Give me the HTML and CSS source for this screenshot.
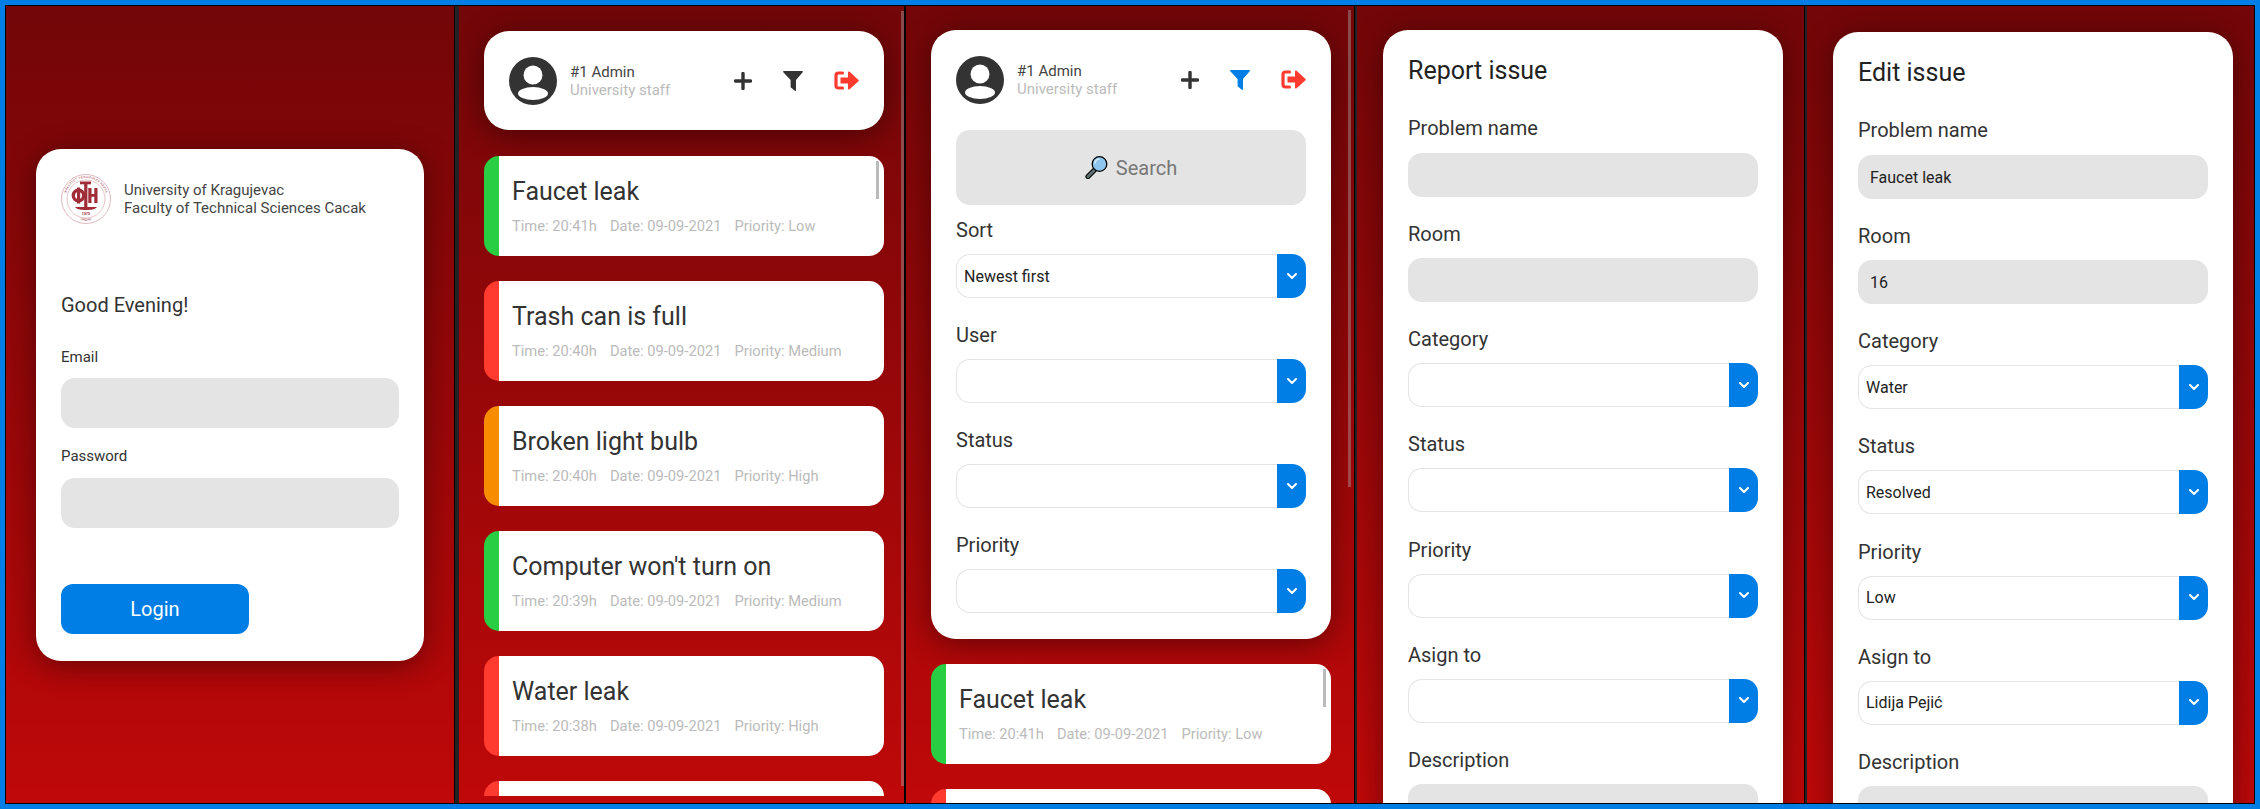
FILE: index.html
```html
<!DOCTYPE html>
<html lang="en">
<head>
<meta charset="utf-8">
<title>Issue reporting screens</title>
<link rel="stylesheet" href="styles.css">
</head>
<body>
<svg class="defs" width="0" height="0" aria-hidden="true">
  <symbol id="i-avatar" viewBox="0 0 48 48">
    <circle cx="24" cy="24" r="24" fill="#333"/>
    <circle cx="24" cy="18" r="9.5" fill="#fff"/>
    <ellipse cx="24" cy="36.5" rx="15" ry="6.5" fill="#fff"/>
  </symbol>
  <symbol id="i-plus" viewBox="0 0 18 18">
    <path d="M9 1.5v15M1.5 9h15" stroke="currentColor" stroke-width="3.4" stroke-linecap="round" fill="none"/>
  </symbol>
  <symbol id="i-filter" viewBox="0 0 20 20">
    <path d="M.8 0h18.4c.7 0 1 .8.5 1.3L13 9v10.2c0 .7-.7 1-1.2.6L7.6 16.300V9L.3 1.300C-.2.800.1 0 .8 0z" fill="currentColor"/>
  </symbol>
  <symbol id="i-logout" viewBox="0 0 25 19">
    <path d="M8.500 2H4.500C3 2 2 3 2 4.500v10C2 16 3 17 4.500 17h4" stroke="currentColor" stroke-width="3.200" fill="none" stroke-linecap="round"/>
    <path d="M6.500 6.500h7.500V1.500c0-1 .9-1.400 1.600-.8L24.500 9c.4.300.4.900 0 1.200l-8.900 8.100c-.7.600-1.600.200-1.600-.8v-5H6.500z" fill="currentColor"/>
  </symbol>
  <symbol id="i-chevron" viewBox="0 0 10 7">
    <path d="M1 1l4 4 4-4" stroke="#fff" stroke-width="2" fill="none" stroke-linecap="round" stroke-linejoin="round"/>
  </symbol>
</svg>

<main class="frame">
  <div class="inner">

    <section class="panel panel-login">
      <form class="card login-card">
        <div class="brand">
          <svg class="logo" viewBox="0 0 50 50" role="img" aria-label="Faculty crest">
            <defs>
              <path id="ring-top" d="M5.500 31A20.500 20.500 0 1 1 44.500 31"/>
              <path id="ring-bottom" d="M12 42.500A22 22 0 0 0 38 42.500"/>
            </defs>
            <circle cx="25" cy="25" r="24.500" fill="none" stroke="#cf9ba0" stroke-width=".7"/>
            <circle cx="25" cy="25" r="19" fill="none" stroke="#cf9ba0" stroke-width=".6"/>
            <text class="logo-ring"><textPath href="#ring-top" startOffset="50%" text-anchor="middle">ФАКУЛТЕТ ТЕХНИЧКИХ НАУКА</textPath></text>
            <text class="logo-ring"><textPath href="#ring-bottom" startOffset="50%" text-anchor="middle">ЧАЧАК</textPath></text>
            <g fill="#a02c37">
              <rect x="19" y="7.500" width="11" height="2.800"/>
              <rect x="23.200" y="8" width="3.200" height="26"/>
              <rect x="27.300" y="14" width="3.200" height="15"/>
              <rect x="33.300" y="14" width="3.200" height="15"/>
              <rect x="28" y="20" width="7" height="2.800"/>
              <path d="M14 33h22c-2 2.200-5 3-11 3s-9-.8-11-3z"/>
            </g>
            <circle cx="17.500" cy="21.500" r="5.200" fill="none" stroke="#a02c37" stroke-width="3.400"/>
            <rect x="16" y="13.500" width="3.200" height="16" fill="#a02c37"/>
            <text class="logo-year" x="25" y="40.500" text-anchor="middle">1975</text>
          </svg>
          <p class="brand-text">University of Kragujevac<br>Faculty of Technical Sciences Cacak</p>
        </div>
        <h1 class="greeting">Good Evening!</h1>
        <label class="login-label" for="email">Email</label>
        <input class="login-input" id="email" type="text">
        <label class="login-label login-label-second" for="password">Password</label>
        <input class="login-input" id="password" type="password">
        <button class="login-button" type="button">Login</button>
      </form>
    </section>

    <div class="divider divider-thick"></div>

    <section class="panel panel-list">
      <div class="scroll-clip">
        <header class="card user-card">
          <div class="user-row">
            <svg class="avatar"><use href="#i-avatar"/></svg>
            <div class="user-text"><div class="user-name">#1 Admin</div><div class="user-role">University staff</div></div>
            <svg class="tool tool-plus"><use href="#i-plus"/></svg>
            <svg class="tool tool-filter"><use href="#i-filter"/></svg>
            <svg class="tool tool-logout"><use href="#i-logout"/></svg>
          </div>
        </header>
        <article class="task task-green">
          <h2 class="task-title">Faucet leak</h2>
          <p class="task-meta"><span>Time: 20:41h</span><span>Date: 09-09-2021</span><span>Priority: Low</span></p>
          <div class="task-thumb"></div>
        </article>
        <article class="task task-red">
          <h2 class="task-title">Trash can is full</h2>
          <p class="task-meta"><span>Time: 20:40h</span><span>Date: 09-09-2021</span><span>Priority: Medium</span></p>
        </article>
        <article class="task task-orange">
          <h2 class="task-title">Broken light bulb</h2>
          <p class="task-meta"><span>Time: 20:40h</span><span>Date: 09-09-2021</span><span>Priority: High</span></p>
        </article>
        <article class="task task-green">
          <h2 class="task-title">Computer won't turn on</h2>
          <p class="task-meta"><span>Time: 20:39h</span><span>Date: 09-09-2021</span><span>Priority: Medium</span></p>
        </article>
        <article class="task task-red">
          <h2 class="task-title">Water leak</h2>
          <p class="task-meta"><span>Time: 20:38h</span><span>Date: 09-09-2021</span><span>Priority: High</span></p>
        </article>
        <article class="task task-red"></article>
      </div>
      <div class="scrollbar scrollbar-list"></div>
    </section>

    <div class="divider divider-thin"></div>

    <section class="panel panel-filter">
      <div class="card filter-card">
        <div class="user-row">
          <svg class="avatar"><use href="#i-avatar"/></svg>
          <div class="user-text"><div class="user-name">#1 Admin</div><div class="user-role">University staff</div></div>
          <svg class="tool tool-plus"><use href="#i-plus"/></svg>
          <svg class="tool tool-filter tool-active"><use href="#i-filter"/></svg>
          <svg class="tool tool-logout"><use href="#i-logout"/></svg>
        </div>
        <button class="search" type="button">
          <svg class="search-icon" viewBox="0 0 23 23" aria-hidden="true">
            <path d="M9 14.500 3 20.500" stroke="#000" stroke-width="5.200" stroke-linecap="round"/>
            <path d="M9 14.500 3 20.500" stroke="#5e7074" stroke-width="3" stroke-linecap="round"/>
            <circle cx="14.500" cy="8" r="7.300" fill="#8fc6ee" stroke="#000" stroke-width="1.300"/>
            <path d="M9.800 7.500a5 5 0 0 1 4.700-4.500" stroke="#d5ecfb" stroke-width="1.500" fill="none"/>
          </svg>
          <span>Search</span>
        </button>
        <div class="group group-first"><div class="label">Sort</div>
          <div class="select"><select><option>Newest first</option></select><span class="select-btn"><svg class="chevron"><use href="#i-chevron"/></svg></span></div>
        </div>
        <div class="group"><div class="label">User</div>
          <div class="select"><select></select><span class="select-btn"><svg class="chevron"><use href="#i-chevron"/></svg></span></div>
        </div>
        <div class="group"><div class="label">Status</div>
          <div class="select"><select></select><span class="select-btn"><svg class="chevron"><use href="#i-chevron"/></svg></span></div>
        </div>
        <div class="group group-last"><div class="label">Priority</div>
          <div class="select"><select></select><span class="select-btn"><svg class="chevron"><use href="#i-chevron"/></svg></span></div>
        </div>
      </div>
      <article class="task task-green">
        <h2 class="task-title">Faucet leak</h2>
        <p class="task-meta"><span>Time: 20:41h</span><span>Date: 09-09-2021</span><span>Priority: Low</span></p>
        <div class="task-thumb"></div>
      </article>
      <article class="task task-red"></article>
      <div class="scrollbar scrollbar-filter"></div>
    </section>

    <div class="divider divider-thick-alt"></div>

    <section class="panel panel-form">
      <form class="card form-card">
        <h2 class="form-title">Report issue</h2>
        <div class="group"><div class="label">Problem name</div><input class="field" type="text"></div>
        <div class="group"><div class="label">Room</div><input class="field" type="text"></div>
        <div class="group"><div class="label">Category</div>
          <div class="select"><select></select><span class="select-btn"><svg class="chevron"><use href="#i-chevron"/></svg></span></div>
        </div>
        <div class="group"><div class="label">Status</div>
          <div class="select"><select></select><span class="select-btn"><svg class="chevron"><use href="#i-chevron"/></svg></span></div>
        </div>
        <div class="group"><div class="label">Priority</div>
          <div class="select"><select></select><span class="select-btn"><svg class="chevron"><use href="#i-chevron"/></svg></span></div>
        </div>
        <div class="group"><div class="label">Asign to</div>
          <div class="select"><select></select><span class="select-btn"><svg class="chevron"><use href="#i-chevron"/></svg></span></div>
        </div>
        <div class="group"><div class="label">Description</div><div class="textarea"></div></div>
      </form>
    </section>

    <div class="divider divider-thick-alt"></div>

    <section class="panel panel-form panel-edit">
      <form class="card form-card">
        <h2 class="form-title">Edit issue</h2>
        <div class="group"><div class="label">Problem name</div><input class="field" type="text" value="Faucet leak"></div>
        <div class="group"><div class="label">Room</div><input class="field" type="text" value="16"></div>
        <div class="group"><div class="label">Category</div>
          <div class="select"><select><option>Water</option></select><span class="select-btn"><svg class="chevron"><use href="#i-chevron"/></svg></span></div>
        </div>
        <div class="group"><div class="label">Status</div>
          <div class="select"><select><option>Resolved</option></select><span class="select-btn"><svg class="chevron"><use href="#i-chevron"/></svg></span></div>
        </div>
        <div class="group"><div class="label">Priority</div>
          <div class="select"><select><option>Low</option></select><span class="select-btn"><svg class="chevron"><use href="#i-chevron"/></svg></span></div>
        </div>
        <div class="group"><div class="label">Asign to</div>
          <div class="select"><select><option>Lidija Pejić</option></select><span class="select-btn"><svg class="chevron"><use href="#i-chevron"/></svg></span></div>
        </div>
        <div class="group"><div class="label">Description</div><div class="textarea"></div></div>
      </form>
    </section>

  </div>
</main>
</body>
</html>
```

FILE: styles.css
```css
* { box-sizing: border-box; }

html, body { margin: 0; padding: 0; height: 809px; }

body {
  font-family: Roboto, "Liberation Sans", sans-serif;
  color: #333;
  overflow: hidden;
}

.defs { position: absolute; }

.frame {
  width: 2260px;
  height: 809px;
  padding: 5px;
  background: #007ee5;
}

.inner {
  display: flex;
  height: 799px;
  border: 1px solid #000;
  background: #000;
}

.divider { flex: none; height: 100%; }
.divider-thick { width: 5px; background: linear-gradient(90deg, #000 1px, #222 1px); }
.divider-thin { width: 2px; background: #000; }
.divider-thick-alt { width: 3px; background: linear-gradient(90deg, #000 1px, #222 1px); }

.panel {
  position: relative;
  flex: none;
  height: 100%;
  overflow: hidden;
  background: linear-gradient(180deg, #720608 0%, #bf0809 100%);
}

.card {
  background: #fff;
  border-radius: 25px;
  box-shadow: 0 5px 30px rgba(0, 0, 0, .42);
}

/* Login */
.panel-login {
  width: 448px;
  display: flex;
  justify-content: center;
  align-items: center;
}

.login-card {
  width: 388px;
  height: 512px;
  padding: 25px;
  display: flex;
  flex-direction: column;
  align-items: flex-start;
}

.brand { display: flex; align-items: center; gap: 13px; }
.logo { width: 50px; height: 50px; flex: none; }
.logo-ring { font-family: "Liberation Sans", sans-serif; font-size: 3.300px; fill: #a8404c; letter-spacing: .15px; }
.logo-year { font-family: "Liberation Sans", sans-serif; font-size: 3.800px; font-weight: 700; fill: #a02c37; }
.brand-text { margin: 0; font-size: 15px; line-height: 18px; color: #444; }

.greeting {
  margin: 70px 0 0;
  font-size: 20px;
  font-weight: 400;
  line-height: 23px;
}

.login-label {
  display: block;
  margin: 31px 0 12px;
  font-size: 15px;
  line-height: 18px;
}
.login-label-second { margin: 19px 0 13px; }

.login-input {
  display: block;
  width: 338px;
  height: 50px;
  border: 0;
  border-radius: 14px;
  background: #e4e4e4;
}

.login-button {
  width: 188px;
  height: 50px;
  margin-top: 56px;
  border: 0;
  border-radius: 12px;
  background: #007ee5;
  color: #fff;
  font: 400 20px Roboto, sans-serif;
}

/* List */
.panel-list { width: 445px; }

.scroll-clip {
  height: 790px;
  padding: 25px 0 0 25px;
  overflow: hidden;
}

.user-card { width: 400px; height: 99px; padding: 26px 25px; margin-bottom: 26px; }

.user-row { display: flex; align-items: center; height: 48px; }
.avatar { width: 48px; height: 48px; flex: none; }
.user-text { margin-left: 13px; width: 151px; flex: none; }
.user-name { font-size: 15px; line-height: 18px; color: #444; }
.user-role { font-size: 15px; line-height: 18px; color: #bbb; }

.tool { flex: none; margin-top: -1px; color: #333; }
.tool-plus { width: 18px; height: 18px; margin-left: 13px; }
.tool-filter { width: 20px; height: 20px; margin-left: 31px; }
.tool-logout { width: 25px; height: 19px; margin-left: 31px; color: #ff3b30; }
.tool-active { color: #007ee5; }

.task {
  position: relative;
  width: 400px;
  height: 100px;
  margin-bottom: 25px;
  padding: 21px 0 0 13px;
  border-left: 15px solid;
  border-radius: 15px;
  background-color: #fff;
  background-clip: padding-box;
}
.task-green { border-left-color: #2ace42; }
.task-red { border-left-color: #ff3b30; }
.task-orange { border-left-color: #f78c00; }

.task-title { margin: 0; font-size: 25px; font-weight: 400; line-height: 30px; color: #333; }
.task-meta { display: flex; gap: 13px; margin: 10px 0 0; font-size: 14.700px; line-height: 18px; color: #bbb; }

.task-thumb {
  position: absolute;
  top: 5px;
  right: 5px;
  width: 3px;
  height: 38px;
  background: #bbb;
}

.scrollbar { position: absolute; width: 3px; background: rgba(176, 176, 176, .4); }
.scrollbar-list { top: 5px; left: 442px; height: 775px; }
.scrollbar-filter { top: 4px; left: 442px; height: 477px; }

/* Filter */
.panel-filter { width: 448px; padding: 24px 0 0 25px; }

.filter-card { width: 400px; height: 609px; padding: 26px 25px; margin-bottom: 25px; }

.search {
  display: flex;
  align-items: center;
  justify-content: center;
  gap: 8px;
  width: 350px;
  height: 75px;
  margin-top: 26px;
  border: 0;
  border-radius: 14px;
  background: #e4e4e4;
  color: #777;
  font: 400 20px Roboto, sans-serif;
}
.search-icon { width: 23px; height: 23px; flex: none; }

.group { margin-bottom: 25.170px; }
.group-first { margin-top: 13px; }
.group-last { margin-bottom: 0; }

.label { margin-bottom: 12px; font-size: 20px; line-height: 24px; color: #333; }

.select { display: flex; width: 350px; height: 44px; }
.select select {
  flex: 1;
  min-width: 0;
  height: 100%;
  padding: 0 0 0 7px;
  border: 1px solid #e4e4e4;
  border-right: 0;
  border-radius: 14px 0 0 14px;
  background: #fff;
  color: #222;
  font: 400 16px Roboto, sans-serif;
  appearance: none;
  outline: 0;
}
.select-btn {
  display: flex;
  align-items: center;
  justify-content: center;
  flex: none;
  width: 29px;
  border-radius: 0 14px 14px 0;
  background: #007ee5;
}
.chevron { width: 10px; height: 7px; }

/* Forms */
.panel-form { width: 447px; padding: 24px 0 0 26px; }
.panel-edit { padding-top: 26px; }

.form-card { width: 400px; height: 1000px; padding: 26px 25px; }

.form-title { margin: 0 0 30px; font-size: 25px; font-weight: 400; line-height: 30px; color: #222; }
.form-title + .group .label { margin-bottom: 13px; }

.field {
  display: block;
  width: 350px;
  height: 44px;
  padding: 0 12px;
  border: 0;
  border-radius: 14px;
  background: #e4e4e4;
  color: #222;
  font: 400 16px Roboto, sans-serif;
}

.textarea { width: 350px; height: 120px; border-radius: 14px; background: #e4e4e4; }
```
